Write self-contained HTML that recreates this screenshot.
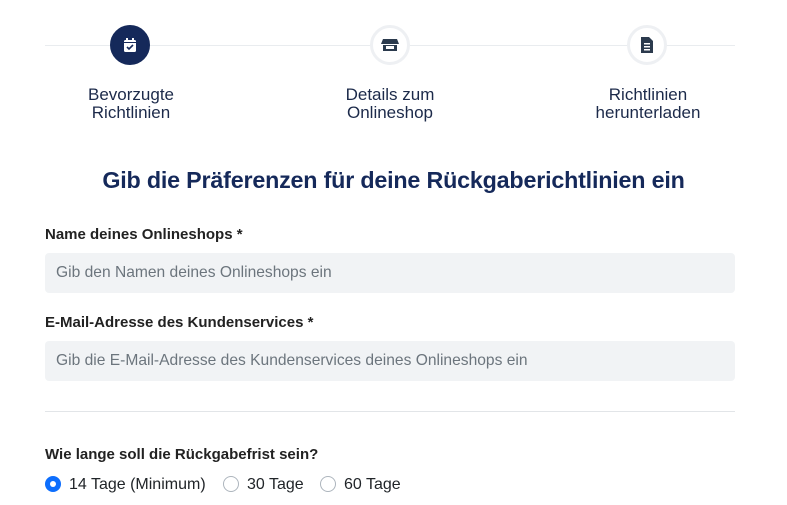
<!DOCTYPE html>
<html><head><meta charset="utf-8"><style>
*{box-sizing:border-box;margin:0;padding:0}
body{width:787px;height:505px;background:#fff;font-family:"Liberation Sans",Arial,sans-serif;position:relative;overflow:hidden;color:#212529}
.line{position:absolute;left:45px;width:690px;top:45px;height:1px;background:#e9ecef}
.c{position:absolute;top:25px;width:40px;height:40px;border-radius:50%;background:#fff;border:3px solid #eef0f3;display:flex;align-items:center;justify-content:center}
.c.a{background:#15295a;border-color:#15295a}
.lab{position:absolute;top:86px;width:200px;text-align:center;font-size:17px;line-height:18px;color:#1c2a4a}
h1{position:absolute;top:167px;left:0;width:787px;text-align:center;font-size:23.3px;font-weight:bold;color:#15295a;letter-spacing:-0.2px}
.fl{position:absolute;left:45px;font-size:15px;font-weight:bold;color:#222}
.in{position:absolute;left:45px;width:690px;height:40px;background:#f1f3f5;border-radius:4px;padding-left:11px;line-height:40px;font-size:15.6px;color:#6c757d}
.hr{position:absolute;left:45px;width:690px;top:411px;height:1px;background:#e2e5e8}
.r{position:absolute;top:476px;width:16px;height:16px;border-radius:50%;border:1px solid #adb5bd;background:#fff}
.r.on{background:#0d6efd;border:none}
.r.on:after{content:"";position:absolute;left:5px;top:5px;width:6px;height:6px;border-radius:50%;background:#fff}
.rt{position:absolute;top:476px;font-size:16px;color:#212529}
</style></head><body>
<div class="line"></div>
<div class="c a" style="left:110px"><svg width="14" height="16" viewBox="0 0 14 16"><rect x="1" y="3" width="12" height="12" rx="1.5" fill="#fff"/><rect x="3" y="1" width="2" height="3" fill="#fff"/><rect x="9" y="1" width="2" height="3" fill="#fff"/><rect x="1" y="5" width="12" height="1" fill="#15295a"/><path d="M4 10l2 2 4-4" stroke="#15295a" stroke-width="1.6" fill="none"/></svg></div>
<div class="c" style="left:370px"><svg width="18" height="14" viewBox="0 0 18 14"><path d="M2 1h14l2 5H0z" fill="#2b3a4d"/><rect x="2" y="7" width="14" height="6" fill="#2b3a4d"/><rect x="5" y="8" width="8" height="3" fill="#fff"/></svg></div>
<div class="c" style="left:627px"><svg width="12" height="16" viewBox="0 0 12 16"><path d="M0 0h8l4 4v12H0z" fill="#2b3a4d"/><rect x="3" y="6" width="6" height="1.5" fill="#fff"/><rect x="3" y="9" width="6" height="1.5" fill="#fff"/><rect x="3" y="12" width="6" height="1.5" fill="#fff"/></svg></div>
<div class="lab" style="left:31px">Bevorzugte<br>Richtlinien</div>
<div class="lab" style="left:290px">Details zum<br>Onlineshop</div>
<div class="lab" style="left:548px">Richtlinien<br>herunterladen</div>
<h1>Gib die Präferenzen für deine Rückgaberichtlinien ein</h1>
<div class="fl" style="top:226px">Name deines Onlineshops *</div>
<div class="in" style="top:253px">Gib den Namen deines Onlineshops ein</div>
<div class="fl" style="top:314px">E-Mail-Adresse des Kundenservices *</div>
<div class="in" style="top:341px">Gib die E-Mail-Adresse des Kundenservices deines Onlineshops ein</div>
<div class="hr"></div>
<div class="fl" style="top:446px">Wie lange soll die Rückgabefrist sein?</div>
<div class="r on" style="left:45px"></div><div class="rt" style="left:69px">14 Tage (Minimum)</div>
<div class="r" style="left:223px"></div><div class="rt" style="left:247px">30 Tage</div>
<div class="r" style="left:320px"></div><div class="rt" style="left:344px">60 Tage</div>
</body></html>
